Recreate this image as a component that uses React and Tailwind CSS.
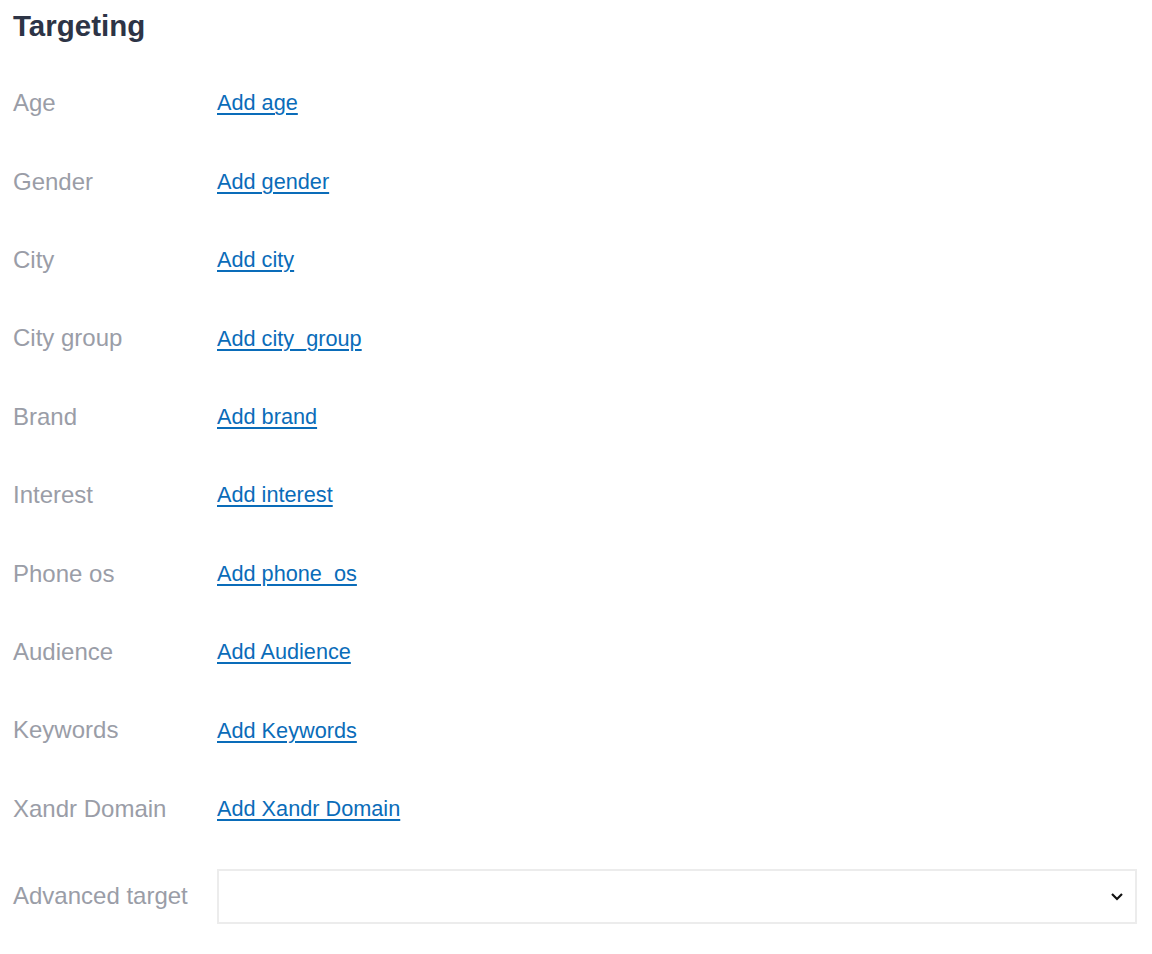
const fields = [
  { label: "Age", action: "Add age" },
  { label: "Gender", action: "Add gender" },
  { label: "City", action: "Add city" },
  { label: "City group", action: "Add city_group" },
  { label: "Brand", action: "Add brand" },
  { label: "Interest", action: "Add interest" },
  { label: "Phone os", action: "Add phone_os" },
  { label: "Audience", action: "Add Audience" },
  { label: "Keywords", action: "Add Keywords" },
  { label: "Xandr Domain", action: "Add Xandr Domain" },
];

function TargetRow({ label, action }) {
  return (
    <div className="flex items-center h-[78.4px]">
      <div className="w-[204px] shrink-0 text-[24px] text-[#9a9da7]">{label}</div>
      <a
        href="#"
        className="text-[21.7px] text-[#0a6cb9] underline decoration-2 underline-offset-[3px] pt-[1px]"
      >
        {action}
      </a>
    </div>
  );
}

export default function App() {
  return (
    <div className="min-h-screen bg-white pl-[13px] pr-[15px] pt-[8px] font-['Liberation_Sans',Arial,sans-serif]">
      <h2 className="text-[29.5px] leading-[35px] font-bold text-[#2d3446] mb-[21px]">Targeting</h2>

      {fields.map((f) => (
        <TargetRow key={f.label} label={f.label} action={f.action} />
      ))}

      <div className="flex items-center pt-[21px]">
        <div className="w-[204px] shrink-0 text-[24px] text-[#9a9da7]">Advanced target</div>
        <div className="flex-1 h-[55px] border-2 border-[#ececec] bg-white flex items-center justify-end pr-[11px]">
          <svg width="14" height="9" viewBox="0 0 14 9" fill="none">
            <polyline points="2,2 7,7 12,2" stroke="#111" strokeWidth="2.2" />
          </svg>
        </div>
      </div>
    </div>
  );
}
